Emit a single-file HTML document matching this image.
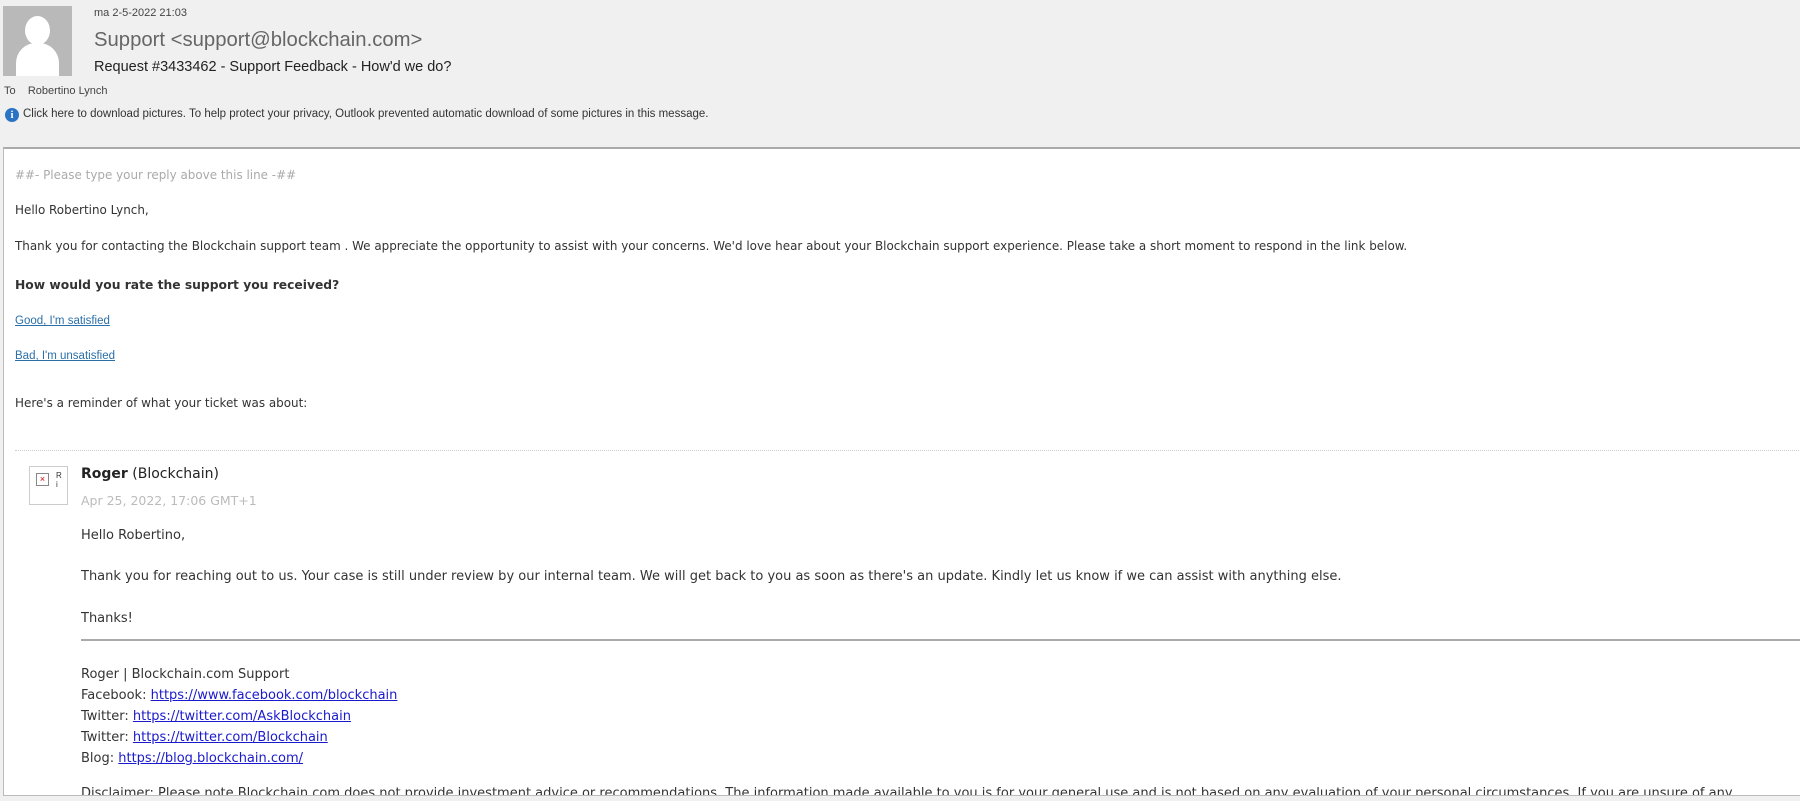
<!DOCTYPE html>
<html><head><meta charset="utf-8"><style>
html,body{margin:0;padding:0;width:1800px;height:801px;overflow:hidden;background:#f0f0f0;font-family:"Liberation Sans",sans-serif;}
.abs{position:absolute;white-space:nowrap;}
#box{position:absolute;left:3px;top:147px;width:1800px;height:646px;background:#fff;border-top:2px solid #aaa;border-left:1px solid #bbb;border-bottom:1px solid #bbb;overflow:hidden;}
.b{font-family:"DejaVu Sans",sans-serif;font-size:11.95px;color:#333;}
.m{font-family:"DejaVu Sans",sans-serif;font-size:13px;color:#333;}
.lk{color:#2a6fa8;text-decoration:underline;font-family:"Liberation Sans",sans-serif;font-size:11.5px;}
.sl{color:#1a1acc;text-decoration:underline;}
</style></head><body>
<div class="abs" style="left:3px;top:6px;width:69px;height:70px;background:#b9b9b9;overflow:hidden">
<div style="position:absolute;left:22px;top:10px;width:25px;height:29px;border-radius:50%;background:#fff"></div>
<div style="position:absolute;left:13px;top:37px;width:43px;height:40px;border-radius:20px 20px 0 0;background:#fff"></div>
</div>
<div class="abs" style="left:94px;top:7px;font-size:11px;color:#444">ma 2-5-2022 21:03</div>
<div class="abs" style="left:94px;top:29px;font-size:20.3px;color:#666">Support &lt;support@blockchain.com&gt;</div>
<div class="abs" style="left:94px;top:59px;font-size:14.5px;color:#222">Request #3433462 - Support Feedback - How'd we do?</div>
<div class="abs" style="left:4px;top:85px;font-size:11px;color:#444">To &nbsp;&nbsp;&nbsp;Robertino Lynch</div>
<div class="abs" style="left:5px;top:108px;width:14px;height:14px;border-radius:50%;background:#2a73c5;color:#fff;font:bold 11px 'Liberation Serif',serif;text-align:center;line-height:14px">i</div>
<div class="abs" style="left:23px;top:108px;font-size:11.5px;color:#333">Click here to download pictures. To help protect your privacy, Outlook prevented automatic download of some pictures in this message.</div>
<div id="box">
<div class="abs b" style="left:11px;top:19px;color:#aaa">##- Please type your reply above this line -##</div>
<div class="abs b" style="left:11px;top:54px">Hello Robertino Lynch,</div>
<div class="abs b" style="left:11px;top:90px">Thank you for contacting the Blockchain support team . We appreciate the opportunity to assist with your concerns. We'd love hear about your Blockchain support experience. Please take a short moment to respond in the link below.</div>
<div class="abs b" style="left:11px;top:129px;font-weight:bold;font-size:12.3px">How would you rate the support you received?</div>
<div class="abs lk" style="left:11px;top:166px">Good, I'm satisfied</div>
<div class="abs lk" style="left:11px;top:201px">Bad, I'm unsatisfied</div>
<div class="abs b" style="left:11px;top:247px">Here's a reminder of what your ticket was about:</div>
<div class="abs" style="left:11px;top:301px;width:1790px;border-top:1px dotted #ccc"></div>
<div class="abs" style="left:25px;top:317px;width:37px;height:37px;border:1px solid #ccc;background:#fff">
<div style="position:absolute;left:6px;top:6px;width:11px;height:11px;border:1px solid #888;color:#c00;font-size:9px;line-height:11px;text-align:center">×</div>
<div style="position:absolute;left:26px;top:4px;font-size:8px;line-height:9px;color:#333">R<br>i</div>
</div>
<div class="abs m" style="left:77px;top:317px;font-size:14px;color:#222"><b>Roger</b> (Blockchain)</div>
<div class="abs m" style="left:77px;top:344px;color:#bbb;font-size:12.5px">Apr 25, 2022, 17:06 GMT+1</div>
<div class="abs m" style="left:77px;top:379px">Hello Robertino,</div>
<div class="abs m" style="left:77px;top:420px">Thank you for reaching out to us. Your case is still under review by our internal team. We will get back to you as soon as there's an update. Kindly let us know if we can assist with anything else.</div>
<div class="abs m" style="left:77px;top:462px">Thanks!</div>
<div class="abs" style="left:77px;top:490px;width:1720px;border-top:2px solid #aaa"></div>
<div class="abs m" style="left:77px;top:518px">Roger | Blockchain.com Support</div>
<div class="abs m" style="left:77px;top:539px">Facebook: <span class="sl">https://www.facebook.com/blockchain</span></div>
<div class="abs m" style="left:77px;top:560px">Twitter: <span class="sl">https://twitter.com/AskBlockchain</span></div>
<div class="abs m" style="left:77px;top:581px">Twitter: <span class="sl">https://twitter.com/Blockchain</span></div>
<div class="abs m" style="left:77px;top:602px">Blog: <span class="sl">https://blog.blockchain.com/</span></div>
<div class="abs m" style="left:77px;top:637px">Disclaimer: Please note Blockchain.com does not provide investment advice or recommendations. The information made available to you is for your general use and is not based on any evaluation of your personal circumstances. If you are unsure of any</div>
</div>
</body></html>
